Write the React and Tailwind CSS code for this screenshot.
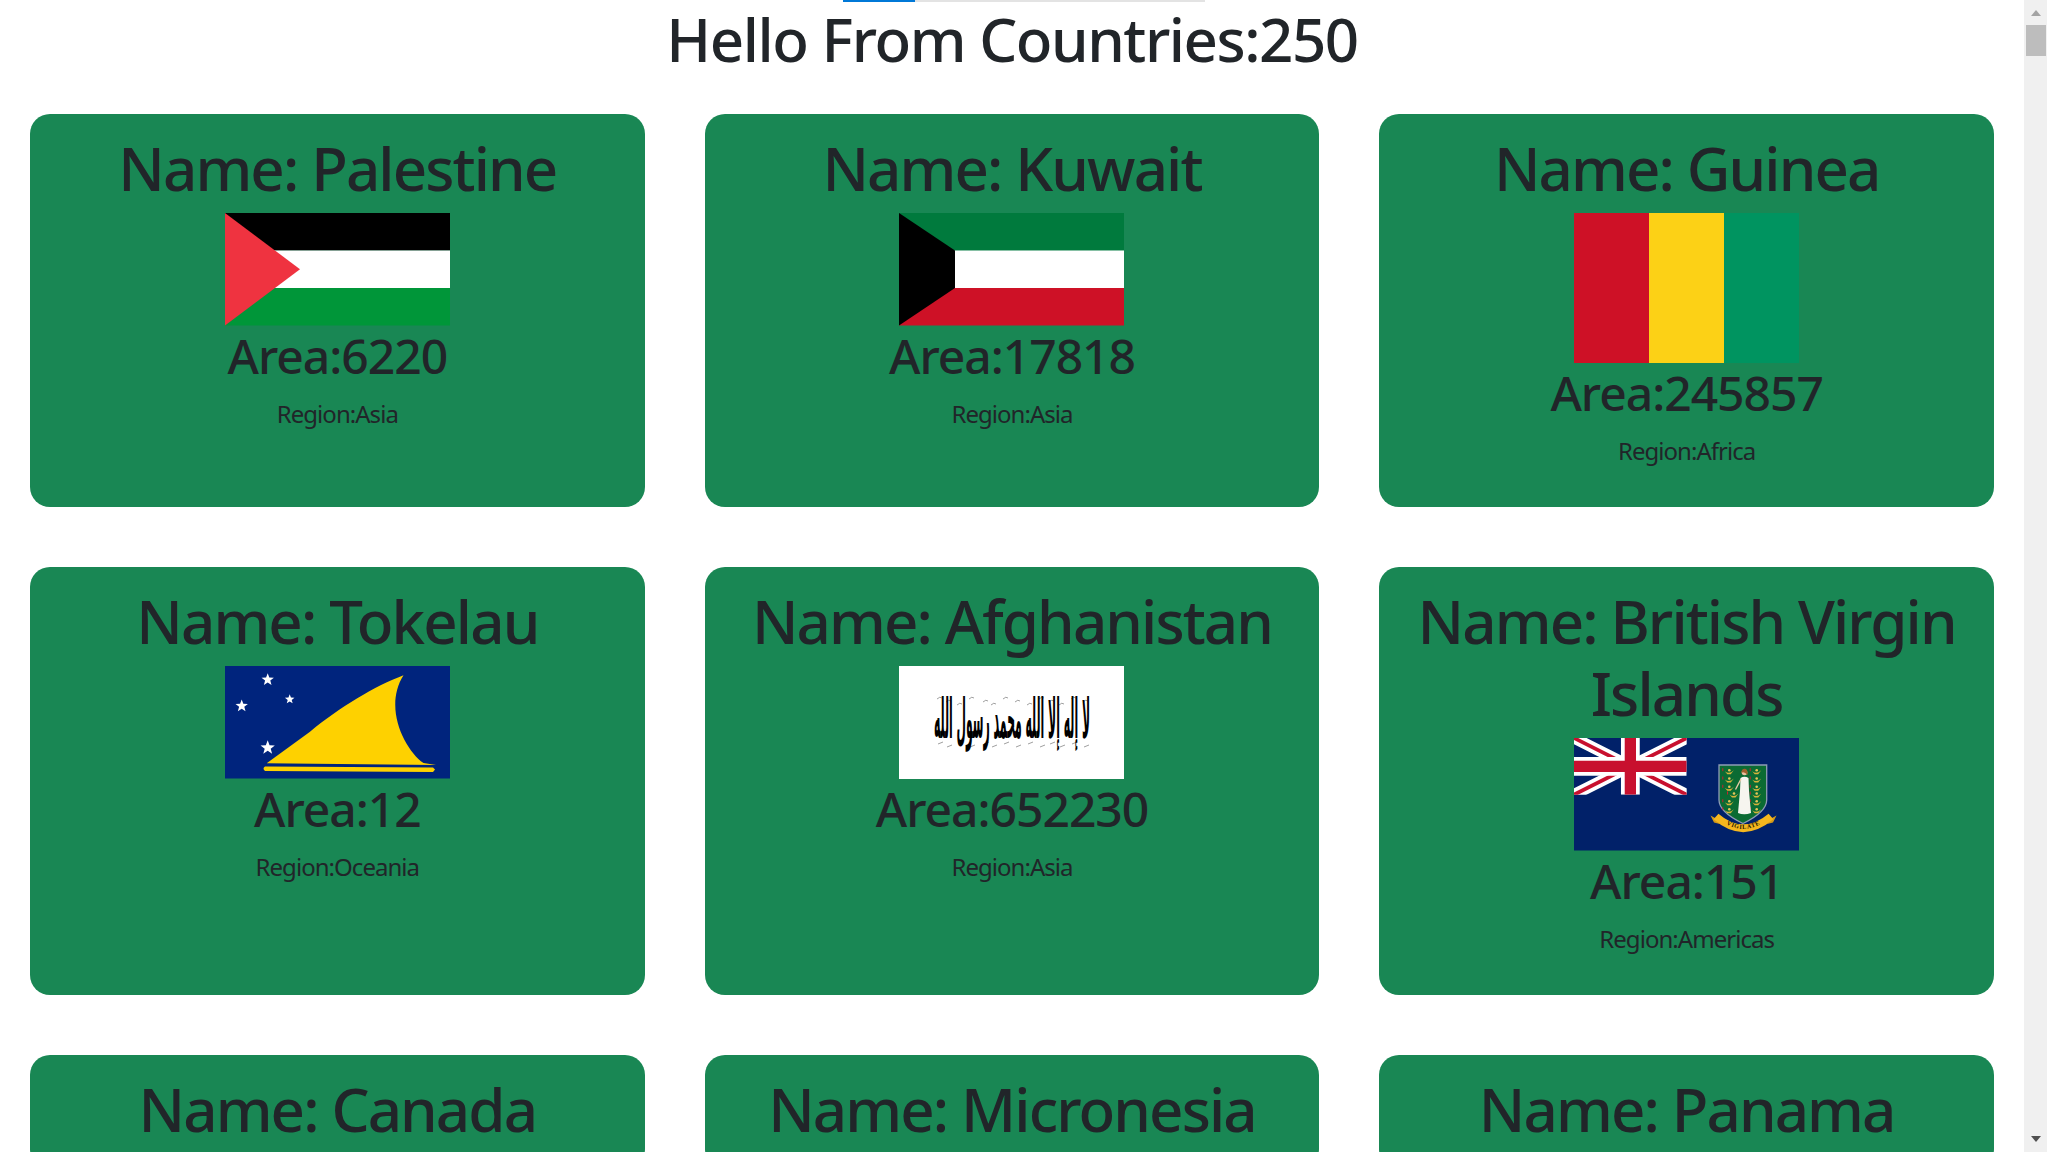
import React from "react";

const Palestine = () => (
  <svg viewBox="0 0 225 112.5" className="block mx-auto w-[225px] h-[112.5px]">
    <rect width="225" height="37.5" fill="#000" />
    <rect y="37.5" width="225" height="37.5" fill="#fff" />
    <rect y="75" width="225" height="37.5" fill="#009639" />
    <polygon points="0,0 75,56.25 0,112.5" fill="#ef3340" />
  </svg>
);

const Kuwait = () => (
  <svg viewBox="0 0 225 112.5" className="block mx-auto w-[225px] h-[112.5px]">
    <rect width="225" height="37.5" fill="#007a3d" />
    <rect y="37.5" width="225" height="37.5" fill="#fff" />
    <rect y="75" width="225" height="37.5" fill="#ce1126" />
    <polygon points="0,0 56,37.5 56,75 0,112.5" fill="#000" />
  </svg>
);

const Guinea = () => (
  <svg viewBox="0 0 225 150" className="block mx-auto w-[225px] h-[150px]">
    <rect width="75" height="150" fill="#ce1126" />
    <rect x="75" width="75" height="150" fill="#fcd116" />
    <rect x="150" width="75" height="150" fill="#009460" />
  </svg>
);

const Star = ({ x, y, r }) => {
  const pts = [];
  for (let i = 0; i < 10; i++) {
    const a = (Math.PI / 5) * i - Math.PI / 2;
    const d = i % 2 === 0 ? r : r * 0.42;
    pts.push(`${x + d * Math.cos(a)},${y + d * Math.sin(a)}`);
  }
  return <polygon points={pts.join(" ")} fill="#fff" />;
};

const Tokelau = () => (
  <svg viewBox="0 0 225 112.5" className="block mx-auto w-[225px] h-[112.5px]">
    <rect width="225" height="112.5" fill="#00247d" />
    <path
      d="M178.5 9.3 C150 20 115 41 85 65.7 L41.7 97.3 L211 99 L198.5 97 C180 84 158 42 178.5 9.3 Z"
      fill="#fed100"
    />
    <path d="M40 100.5 L208 101.5 L210 103.5 L208 106 L40 105 Q37 102.7 40 100.5 Z" fill="#fed100" />
    <Star x={42.7} y={13.7} r={6.5} />
    <Star x={64.7} y={33.3} r={5} />
    <Star x={16.7} y={40} r={6.5} />
    <Star x={42.7} y={81.7} r={7.5} />
  </svg>
);

// thin flourishes above the calligraphy
const marks = [38, 47, 58, 70, 84, 92, 104, 116, 128, 140, 150, 160, 172, 184];

const Afghanistan = () => (
  <svg viewBox="0 0 225 112.5" className="block mx-auto w-[225px] h-[112.5px] bg-white">
    {marks.map((x, i) => (
      <path
        key={x}
        d={`M${x} ${33 + (i % 3) * 3} q3 -3 5 -1 M${x + 1} ${78 + (i % 2) * 3} l5 -2`}
        fill="none"
        stroke="#777"
        strokeWidth="0.7"
      />
    ))}
    <text
      x="113"
      y="66"
      textAnchor="middle"
      textLength="156"
      lengthAdjust="spacingAndGlyphs"
      fontFamily="DejaVu Sans, sans-serif"
      fontWeight="700"
      fontSize="25"
      fill="#000"
      direction="rtl"
      transform="translate(113 59) scale(1 2.2) translate(-113 -60)"
    >
      لا إله إلا الله محمد رسول الله
    </text>
  </svg>
);

const Lamp = ({ x, y }) => (
  <g>
    <path d={`M${x - 4.5} ${y - 0.5} Q${x} ${y + 3} ${x + 4.5} ${y - 1.5} L${x + 1.5} ${y + 2.5} L${x - 2} ${y + 2.5} Z`} fill="#d9b33a" />
    <circle cx={x} cy={y - 1.5} r="1.3" fill="#e6c65a" />
    <rect x={x - 7} y={y - 3.5} width="1" height="3" fill="#c8202f" />
  </g>
);

const BritishVirgin = () => (
  <svg viewBox="0 0 225 112.5" className="block mx-auto w-[225px] h-[112.5px]">
    <rect width="225" height="112.5" fill="#012169" />
    <svg x="0" y="0" width="112.7" height="56.7" viewBox="0 0 60 30" preserveAspectRatio="none">
      <path d="M0 0 L60 30 M60 0 L0 30" stroke="#fff" strokeWidth="6" />
      <path d="M0 0 L60 30 M60 0 L0 30" stroke="#c8102e" strokeWidth="2" />
      <path d="M30 0 V30 M0 15 H60" stroke="#fff" strokeWidth="10" />
      <path d="M30 0 V30 M0 15 H60" stroke="#c8102e" strokeWidth="6" />
    </svg>
    <path d="M145 27 H192.7 V62 Q192.7 74 169 85.5 Q145 74 145 62 Z" fill="#0b6b33" stroke="#8f9cb5" strokeWidth="1.3" />
    {[33.7, 42, 50.3, 64.7, 72.7].map((y) => (
      <Lamp key={`l${y}`} x={155.3} y={y} />
    ))}
    <Lamp x={160} y={57} />
    {[33.7, 42, 50.3, 57, 64.7, 72.7].map((y) => (
      <Lamp key={`r${y}`} x={182.7} y={y} />
    ))}
    {/* figure holding a lamp */}
    <path d="M166.5 40 Q170.5 37.5 174.5 40 L175 53 L177 75 Q170 77.5 164 75 L166 53 Z" fill="#f6f5ef" />
    <path d="M167 41 L161.5 51.5" stroke="#e8c9a8" strokeWidth="1.4" />
    <circle cx="170.5" cy="34.5" r="2.8" fill="#e8c0a0" />
    <path d="M167.3 35 Q167.5 30.5 171 30.7 Q174 31 173.6 37 Q170 33 167.3 35 Z" fill="#a0602c" />
    {/* VIGILATE scroll */}
    <path d="M141 80 L136.5 77.5 L140 84.5 L146 86 Z M198 80 L202.5 77.5 L199 84.5 L193 86 Z" fill="#d49a18" />
    <path d="M142 78.5 Q169 102 197 78.5" fill="none" stroke="#f5b71e" strokeWidth="7.5" />
    <path id="vigilate-text" d="M146 81.8 Q169 100 193 81.8" fill="none" />
    <text fontFamily="Liberation Serif, serif" fontSize="6.2" fontWeight="700" fill="#1a1400" letterSpacing="0.7">
      <textPath href="#vigilate-text" startOffset="50%" textAnchor="middle">VIGILATE</textPath>
    </text>
  </svg>
);

const countries = [
  { name: "Palestine", Flag: Palestine, area: 6220, region: "Asia" },
  { name: "Kuwait", Flag: Kuwait, area: 17818, region: "Asia" },
  { name: "Guinea", Flag: Guinea, area: 245857, region: "Africa" },
  { name: "Tokelau", Flag: Tokelau, area: 12, region: "Oceania" },
  { name: "Afghanistan", Flag: Afghanistan, area: 652230, region: "Asia" },
  { name: "British Virgin Islands", Flag: BritishVirgin, area: 151, region: "Americas" },
  { name: "Canada" },
  { name: "Micronesia" },
  { name: "Panama" },
];

const Country = ({ name, Flag, area, region }) => (
  <div className="bg-[#198754] rounded-[20px] p-[15px] text-center">
    <h1 className="text-[60px] leading-[72px] tracking-[-0.031em] font-medium pt-[3px] mb-[9px]">Name: {name}</h1>
    {Flag && <Flag />}
    {Flag && <h2 className="text-[48px] leading-[57px] tracking-[-0.021em] font-medium pt-px mb-[11px]">Area:{area}</h2>}
    {Flag && <p className="text-[24px] leading-[36px] tracking-[-0.04em] pt-px mb-[23px]">Region:{region}</p>}
  </div>
);

export default function App() {
  return (
    <div className="flex h-screen overflow-hidden bg-white text-[#212529] font-['Noto_Sans',sans-serif]">
      <main className="relative flex-1 min-w-0 overflow-hidden">
        {/* progress bar sits over the heading */}
        <div className="absolute top-0 left-[843px] w-[362px] h-[2px] bg-[#e3e3e3]">
          <div className="w-[72px] h-full bg-[#0078d7]" />
        </div>
        <h1 className="text-center text-[60px] leading-[72px] tracking-[-0.0243em] font-medium pt-[3px] mb-[39px]">Hello From Countries:250</h1>
        <div className="grid grid-cols-3 gap-[60px] px-[30px]">
          {countries.map((c) => (
            <Country key={c.name} {...c} />
          ))}
        </div>
      </main>

      {/* Scrollbar */}
      <aside className="w-[23px] shrink-0 bg-[#f0f0f0] flex flex-col items-center">
        <svg viewBox="0 0 10 6" className="w-[10px] h-[6px] mt-[10px] shrink-0">
          <polygon points="5,0 10,6 0,6" fill="#a3a3a3" />
        </svg>
        <div className="w-[20px] h-[31px] mt-[9px] bg-[#bdbdbd]" />
        <svg viewBox="0 0 10 6" className="w-[10px] h-[6px] mt-auto mb-[10px] shrink-0">
          <polygon points="0,0 10,0 5,6" fill="#505050" />
        </svg>
      </aside>
    </div>
  );
}
